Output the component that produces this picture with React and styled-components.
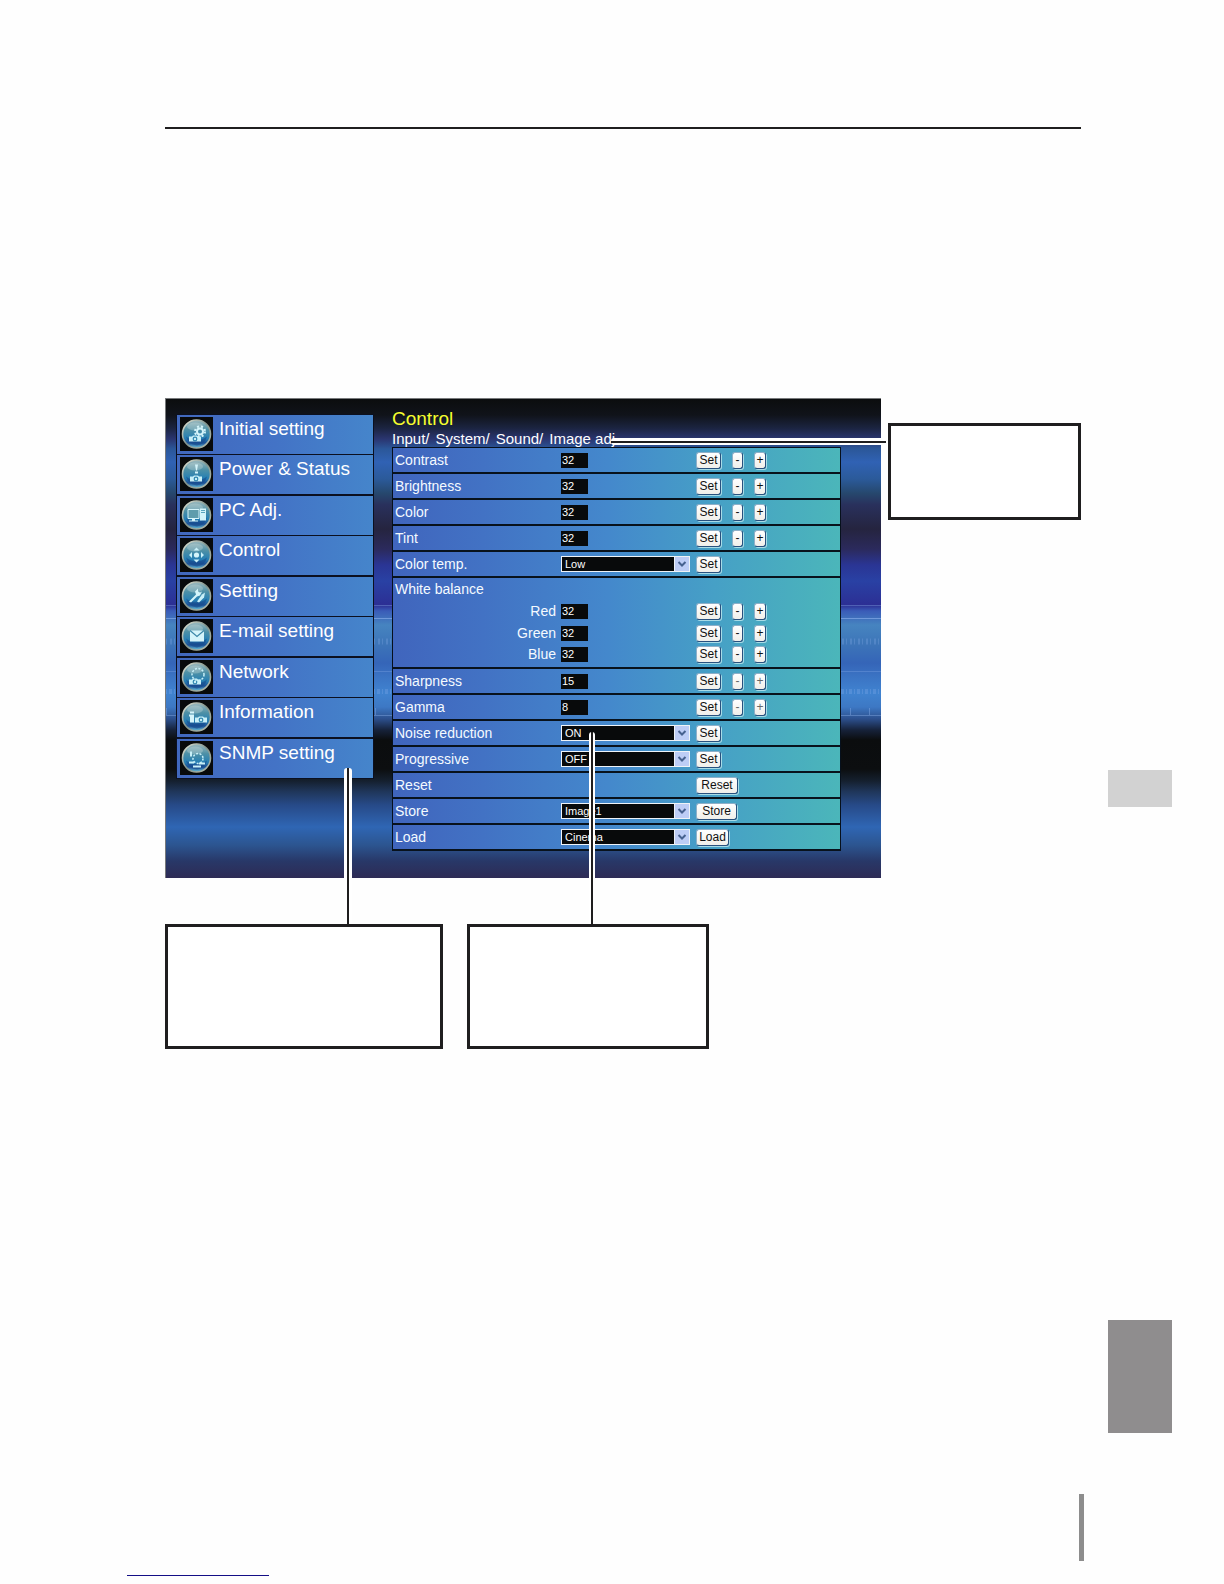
import React, { useState } from "react";
import styled, { createGlobalStyle } from "styled-components";

const GlobalStyle = createGlobalStyle`
  * { box-sizing: border-box; }
  body {
    margin: 0;
    background: #fefefe;
    font-family: "Liberation Sans", Arial, sans-serif;
  }
`;

const ink = "#1f1e1f";

const Page = styled.div`
  display: grid;
  grid-template-columns: minmax(0, 1fr) 64px;
  padding: 0 52px 8px 0;
`;

const Content = styled.main`
  padding: 127px 27px 0 165px;
`;

const HeadRule = styled.hr`
  height: 2px;
  margin: 0 0 269px;
  border: 0;
  background: ${ink};
`;

const Figure = styled.section`
  display: flex;
  align-items: flex-start;
  gap: 7px;
`;

const Screen = styled.div`
  position: relative;
  flex: 1;
  display: flex;
  align-items: flex-start;
  gap: 18px;
  padding: 0 40px 27px 10px;
  border-top: 1px solid #77797b;
  border-left: 1px solid #77797b;
  background: linear-gradient(
    #0b0d0e 0, #10131a 16px, #1b2440 29px, #2a3570 40px, #2b5799 50px,
    #3062b4 63px, #2b5a9a 80px, #26486e 94px, #29305c 106px, #25243f 130px,
    #2b2a5c 150px, #2a3594 166px, #2941a4 182px, #2c2f94 206px, #3a5cb8 212px,
    #4684c0 226px, #3c74b8 246px, #3565b8 264px, #3b74c4 278px, #4083d0 294px,
    #3d78c4 308px, #2c4f8c 320px, #16223a 331px, #0b0d0e 341px, #0c0e10 370px,
    #15202f 382px, #1f3558 392px, #274a88 406px, #2f66b4 428px, #2c5590 446px,
    #283868 462px, #2e2a54 480px
  );
`;

const Backdrop = styled.svg`
  position: absolute;
  left: 0;
  top: 200px;
  width: 100%;
  height: 130px;
  pointer-events: none;
`;

const Menu = styled.nav`
  position: relative;
  flex: 0 0 198px;
  display: flex;
  flex-direction: column;
  margin-top: 15px;
  padding: 1px;
  background: #0b1020;
`;

const MenuItem = styled.a`
  display: flex;
  gap: 6px;
  height: 39px;
  padding: 2px 3px;
  background: linear-gradient(90deg, #4168be 0%, #4373c6 50%, #4585cb 100%);
  color: #fff;
  font-size: 19px;
  line-height: 24px;
  text-decoration: none;
  white-space: nowrap;

  &:nth-child(odd) { margin-bottom: 1px; }
  &:nth-child(even) { margin-bottom: 2px; }
  &:last-child { margin-bottom: 0; }
`;

const IconTile = styled.svg`
  flex: none;
  width: 33px;
  height: 34px;
  background: #080a0b;
`;

const Panel = styled.form`
  position: relative;
  flex: 1;
  padding-top: 9px;
`;

const Title = styled.h1`
  margin: 0;
  color: #f6ff2e;
  font-size: 19px;
  font-weight: 400;
  line-height: 22px;
`;

const Crumbs = styled.div`
  display: flex;
  gap: 6px;
  height: 17px;
  color: #fff;
  font-size: 15px;
  line-height: 17px;
  white-space: nowrap;

  a { color: inherit; text-decoration: none; }
`;

const Settings = styled.table`
  width: 100%;
  table-layout: fixed;
  border-collapse: separate;
  border-spacing: 0;
  border: 1px solid #06101c;
  border-bottom: 0;
  background: linear-gradient(90deg, #4065bd 0%, #4272c4 20%, #4488cc 48%, #46a0c6 72%, #4bb6ba 100%);
  color: #f4faff;
  font-size: 14px;
`;

const LabelColumn = styled.col`
  width: 168px;
`;

const ValueColumn = styled.col`
  width: 135px;
`;

const Row = styled.tr`
  height: ${(p) => p.$height}px;

  th, td {
    padding: ${(p) => (p.$last ? "0 0 2px" : "0")};
    border-bottom: ${(p) => (p.$open ? "0" : "2px solid #08121c")};
    text-align: left;
    vertical-align: middle;
    line-height: 15px;
  }
  th {
    padding-left: 2px;
    padding-right: 5px;
    font-weight: 400;
    text-align: ${(p) => (p.$sub ? "right" : "left")};
  }
`;

const Line = styled.div`
  display: flex;
  align-items: center;
`;

const NumberBox = styled.input`
  display: block;
  width: 27px;
  height: 15px;
  padding: 0 1px;
  border: 0;
  background: #080a0b;
  color: #fff;
  font: 11px/15px "Liberation Sans", Arial, sans-serif;
`;

const SelectFrame = styled.div`
  display: flex;
  width: 129px;
  height: 16px;
  border: 1px solid #eef3f8;
  background: #080a0b;
  position: relative;
`;

const Choice = styled.select`
  appearance: none;
  flex: 1;
  padding: 0 3px;
  border: 0;
  background: transparent;
  color: #fff;
  font: 11px/14px "Liberation Sans", Arial, sans-serif;
`;

const Arrow = styled.svg`
  position: absolute;
  right: 0;
  top: 0;
  width: 15px;
  height: 14px;
  background: #bdcdf6;
  border-left: 1px solid #eef3f8;
  pointer-events: none;
`;

const Button = styled.button`
  width: ${(p) => p.$width}px;
  height: 17px;
  margin-right: ${(p) => p.$gap || 0}px;
  padding: 0;
  border: 1px solid #28507e;
  border-top-color: #8fb0c8;
  border-left-color: #8fb0c8;
  border-radius: 3px;
  background: linear-gradient(#fff, #f0efea);
  box-shadow: 1px 1px 0 #a8dbe6;
  color: ${(p) => (p.$faint ? "#66686a" : "#111")};
  font: 12px/15px "Liberation Sans", Arial, sans-serif;
`;

const LeaderAcross = styled.div`
  position: absolute;
  left: 445px;
  right: -5px;
  top: 39px;
  height: 7px;
  display: flex;
  align-items: center;
  border-radius: 3px 0 0 3px;
  background: #fff;

  &::after {
    content: "";
    flex: 1;
    height: 2px;
    background: ${ink};
  }
`;

const LeaderDown = styled.div`
  position: absolute;
  left: ${(p) => p.$left}px;
  top: ${(p) => p.$top}px;
  bottom: -46px;
  width: ${(p) => p.$width}px;
  display: flex;
  justify-content: center;
  border-radius: 3px 3px 0 0;
  background: #fff;

  &::after {
    content: "";
    width: 2px;
    background: ${ink};
  }
`;

const Note = styled.aside`
  flex: 0 0 ${(p) => p.$width}px;
  height: ${(p) => p.$height}px;
  margin-top: ${(p) => p.$top || 0}px;
  border: 3px solid ${ink};
  background: #fff;
`;

const Notes = styled.div`
  display: flex;
  gap: 24px;
  margin-top: 46px;
`;

const Edge = styled.aside`
  display: flex;
  flex-direction: column;
  gap: 513px;
  padding-top: 770px;
`;

const EdgeTab = styled.div`
  height: ${(p) => p.$height}px;
  background: ${(p) => p.$tone};
`;

const Footer = styled.footer`
  grid-column: 1 / -1;
  padding: 0 88px 0 127px;
`;

const PageMark = styled.div`
  width: 5px;
  height: 67px;
  margin: 61px 0 14px auto;
  background: #8d8d8d;
`;

const LinkRule = styled.hr`
  width: 142px;
  height: 1px;
  margin: 0;
  border: 0;
  background: #140f86;
`;

const projector = (x, y) => (
  <g transform={`translate(${x} ${y})`}>
    <path d="M0 2h3l1-1h4l1 1h3v5H0z" fill="#c8f0f8" />
    <circle cx="6" cy="4.5" r="2.4" fill="#2f86b0" />
    <circle cx="6" cy="4.5" r="1.2" fill="#c8f0f8" />
  </g>
);

const glyphs = {
  initial: (
    <>
      {projector(9, 17)}
      <circle cx="20" cy="14" r="3" fill="none" stroke="#d4f4fa" strokeWidth="2" />
      <circle cx="20" cy="14" r="5" fill="none" stroke="#d4f4fa" strokeWidth="2" strokeDasharray="2 2" />
    </>
  ),
  power: (
    <>
      {projector(10, 17)}
      <path d="M15 7h3l-1 6h-1zM15 14h3v2h-3z" fill="#d4f4fa" />
    </>
  ),
  pc: (
    <>
      <path d="M8 11h11v9H8z" fill="#5e9cac" stroke="#d4f4fa" />
      <path d="M12 20h3v2h3v1H9v-1h3zM20 10h6v12h-6z" fill="#d4f4fa" />
      <path d="M21 12h4M21 14h4" stroke="#5ba5be" />
    </>
  ),
  control: (
    <>
      <path d="M16.500 9l3 3h-6zM16.500 24l3-3h-6zM9 16.500l3-3v6zM24 16.500l-3-3v6z" fill="#c8f0f8" />
      <circle cx="16.500" cy="16.500" r="2.600" fill="#d4f4fa" />
    </>
  ),
  setting: (
    <>
      <path d="M9 22l7-7-1-3 3-3v3l2 1 2-1-2 4-3 1-6 6z" fill="#d4f4fa" />
      <path d="M17 22l5-7 3-2-1 5-5 5z" fill="#c8f0f8" />
    </>
  ),
  mail: (
    <>
      <path d="M10 11h14v11H10z" fill="#d4f4fa" />
      <path d="M10 11l7 6 7-6" fill="none" stroke="#3b87a8" strokeWidth="1.200" />
    </>
  ),
  network: (
    <>
      {projector(9, 17)}
      <circle cx="18" cy="14" r="6" fill="none" stroke="#c8f0f8" strokeWidth="1.500" strokeDasharray="2 1.500" />
    </>
  ),
  info: (
    <>
      <path d="M10 11h4v2h-4zM9 14h5v8h-4v-6H9z" fill="#d4f4fa" />
      {projector(15, 15)}
    </>
  ),
  snmp: (
    <>
      <circle cx="18" cy="17" r="5" fill="none" stroke="#c8f0f8" strokeWidth="1.500" strokeDasharray="2 1.500" />
      <path d="M10 10h2v5h-2zM9 20h5v2H9zM19 21h6v2h-6zM13 24h8v2h-8z" fill="#c8f0f8" />
    </>
  ),
};

function MenuIcon({ name }) {
  return (
    <IconTile viewBox="0 0 33 33" aria-hidden="true">
      <defs>
        <linearGradient id={`ball-${name}`} x1="0" y1="0" x2="0" y2="1">
          <stop offset="0" stopColor="#9db9bd" />
          <stop offset="0.35" stopColor="#4d90a6" />
          <stop offset="0.65" stopColor="#2680b4" />
          <stop offset="0.82" stopColor="#1b4f96" />
          <stop offset="1" stopColor="#6cc6dc" />
        </linearGradient>
        <linearGradient id={`rim-${name}`} x1="0" y1="0" x2="1" y2="1">
          <stop offset="0" stopColor="#e4e8da" />
          <stop offset="0.5" stopColor="#80918a" />
          <stop offset="1" stopColor="#b9c1b4" />
        </linearGradient>
      </defs>
      <circle cx="16.500" cy="16.500" r="14" fill={`url(#ball-${name})`} stroke={`url(#rim-${name})`} strokeWidth="1.600" />
      <path d="M6 19q10 8 21 0q-2 8-10 9q-9-1-11-9z" fill="#164a8c" opacity="0.6" />
      <ellipse cx="15" cy="9" rx="8" ry="4" fill="#dbe7e4" opacity="0.3" />
      {glyphs[name]}
    </IconTile>
  );
}

const menu = [
  ["initial", "Initial setting"],
  ["power", "Power & Status"],
  ["pc", "PC Adj."],
  ["control", "Control"],
  ["setting", "Setting"],
  ["mail", "E-mail setting"],
  ["network", "Network"],
  ["info", "Information"],
  ["snmp", "SNMP setting"],
];

const rows = [
  { label: "Contrast", value: "32" },
  { label: "Brightness", value: "32" },
  { label: "Color", value: "32" },
  { label: "Tint", value: "32" },
  { label: "Color temp.", options: ["Low", "Mid", "High"] },
  { label: "White balance", height: 22, open: true },
  { label: "Red", value: "32", height: 22, open: true, sub: true },
  { label: "Green", value: "32", height: 22, open: true, sub: true },
  { label: "Blue", value: "32", height: 25, sub: true, last: true },
  { label: "Sharpness", value: "15", faint: true },
  { label: "Gamma", value: "8", faint: true },
  { label: "Noise reduction", options: ["ON", "OFF"] },
  { label: "Progressive", options: ["OFF", "ON"] },
  { label: "Reset", action: "Reset", width: 42 },
  { label: "Store", options: ["Image1", "Image2"], action: "Store", width: 41 },
  { label: "Load", options: ["Cinema", "Standard"], action: "Load", width: 33 },
];

function SettingRow({ row }) {
  const [value, setValue] = useState(row.value ?? row.options?.[0] ?? "");
  const id = row.label.toLowerCase().replace(/[^a-z]+/g, "-");
  const isField = row.value || row.options;
  const step = (by) => setValue((v) => String(Number(v) + by));
  return (
    <Row $height={row.height || 26} $open={row.open} $sub={row.sub} $last={row.last}>
      <th scope="row">{isField ? <label htmlFor={id}>{row.label}</label> : row.label}</th>
      <td>
        {row.value && <NumberBox id={id} value={value} onChange={(e) => setValue(e.target.value)} />}
        {row.options && (
          <SelectFrame>
            <Choice id={id} value={value} onChange={(e) => setValue(e.target.value)}>
              {row.options.map((o) => <option key={o}>{o}</option>)}
            </Choice>
            <Arrow viewBox="0 0 14 14" aria-hidden="true">
              <path d="M3.500 5l3.500 3.500L10.500 5" fill="none" stroke="#46618f" strokeWidth="2" />
            </Arrow>
          </SelectFrame>
        )}
      </td>
      <td>
        <Line>
          {(isField || row.action) && (
            <Button type="button" $width={row.width || 25} $gap={11}>{row.action || "Set"}</Button>
          )}
          {row.value && (
            <>
              <Button type="button" $width={11} $gap={11} $faint={row.faint} onClick={() => step(-1)}>-</Button>
              <Button type="button" $width={12} $faint={row.faint} onClick={() => step(1)}>+</Button>
            </>
          )}
        </Line>
      </td>
    </Row>
  );
}

export default function App() {
  return (
    <>
      <GlobalStyle />
      <Page>
        <Content>
          <HeadRule />
          <Figure>
            <Screen>
              <Backdrop aria-hidden="true">
                <g stroke="#8fb4ee" fill="none">
                  <path d="M0 6.500H1600" opacity="0.35" />
                  <path d="M0 19.500H1600" opacity="0.6" />
                  <path d="M0 72.500H1600" opacity="0.3" />
                  <path d="M0 116.500H1600" opacity="0.4" />
                  <path d="M0 42.500H1600" strokeWidth="6" strokeDasharray="1 3 2 2" opacity="0.25" />
                  <path d="M0 92.500H1600" strokeWidth="5" strokeDasharray="1 2 3 2" opacity="0.25" />
                  <path d="M0 112.500H1600" strokeWidth="7" strokeDasharray="1 18" opacity="0.4" />
                </g>
              </Backdrop>
              <Menu aria-label="Main menu">
                {menu.map(([name, label]) => (
                  <MenuItem key={name} href={`#${name}`}>
                    <MenuIcon name={name} />
                    <span>{label}</span>
                  </MenuItem>
                ))}
              </Menu>
              <Panel>
                <Title>Control</Title>
                <Crumbs>
                  <a href="#input">Input/</a>
                  <a href="#system">System/</a>
                  <a href="#sound">Sound/</a>
                  <a href="#image">Image adj.</a>
                </Crumbs>
                <Settings>
                  <colgroup>
                    <LabelColumn />
                    <ValueColumn />
                    <col />
                  </colgroup>
                  <tbody>
                    {rows.map((row) => <SettingRow key={row.label} row={row} />)}
                  </tbody>
                </Settings>
              </Panel>
              <LeaderAcross />
              <LeaderDown $left={178} $top={369} $width={8} />
              <LeaderDown $left={423} $top={333} $width={6} />
            </Screen>
            <Note $width={193} $height={97} $top={25} />
          </Figure>
          <Notes>
            <Note $width={278} $height={125} />
            <Note $width={242} $height={125} />
          </Notes>
        </Content>
        <Edge>
          <EdgeTab $height={37} $tone="#d2d2d2" />
          <EdgeTab $height={113} $tone="#8f8d8e" />
        </Edge>
        <Footer>
          <PageMark />
          <LinkRule />
        </Footer>
      </Page>
    </>
  );
}
